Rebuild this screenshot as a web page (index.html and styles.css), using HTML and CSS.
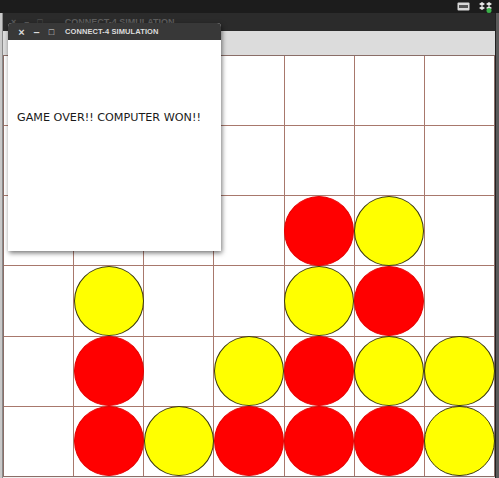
FILE: index.html
```html
<!DOCTYPE html>
<html>
<head>
<meta charset="utf-8">
<link rel="stylesheet" href="styles.css">
</head>
<body>
<div class="topbar">
  <svg class="tray" width="13" height="9" viewBox="0 0 13 9"><rect x="0.5" y="0.5" width="12" height="8" rx="1" fill="#d8d8d8"/><rect x="2" y="3" width="9" height="3" fill="#555"/></svg>
  <svg class="tray" width="13" height="12" viewBox="0 0 13 12"><path d="M3 1 L6 3 L3 5 L0 3 Z M10 1 L13 3 L10 5 L7 3 Z M3 5 L6 7 L3 9 L0 7 Z M10 5 L13 7 L10 9 L7 7 Z" fill="#e8e8e8"/><circle cx="10" cy="9.5" r="2.5" fill="#3bb34a"/></svg>
</div>
<div class="main">
  <div class="leftstrip"></div>
  <div class="window">
    <div class="wtitle"><span class="wctl">×</span><span class="wctl">–</span><span class="wctl">□</span><span class="wname">CONNECT-4 SIMULATION</span></div>
    <div class="toolbar"></div>
    <div class="board">
      <div class="cell"></div><div class="cell"></div><div class="cell"></div><div class="cell"></div><div class="cell"></div><div class="cell"></div><div class="cell"></div>
      <div class="cell"></div><div class="cell"></div><div class="cell"></div><div class="cell"></div><div class="cell"></div><div class="cell"></div><div class="cell"></div>
      <div class="cell"></div><div class="cell"></div><div class="cell"></div><div class="cell"></div><div class="cell"><div class="disc red"></div></div><div class="cell"><div class="disc yellow"></div></div><div class="cell"></div>
      <div class="cell"></div><div class="cell"><div class="disc yellow"></div></div><div class="cell"></div><div class="cell"></div><div class="cell"><div class="disc yellow"></div></div><div class="cell"><div class="disc red"></div></div><div class="cell"></div>
      <div class="cell"></div><div class="cell"><div class="disc red"></div></div><div class="cell"></div><div class="cell"><div class="disc yellow"></div></div><div class="cell"><div class="disc red"></div></div><div class="cell"><div class="disc yellow"></div></div><div class="cell"><div class="disc yellow"></div></div>
      <div class="cell"></div><div class="cell"><div class="disc red"></div></div><div class="cell"><div class="disc yellow"></div></div><div class="cell"><div class="disc red"></div></div><div class="cell"><div class="disc red"></div></div><div class="cell"><div class="disc red"></div></div><div class="cell"><div class="disc yellow"></div></div>
    </div>
  </div>
  <div class="rightstrip"></div>
</div>
<div class="dialog">
  <div class="dtitle"><span class="dctl">×</span><span class="dctl">–</span><span class="dctl sq">□</span><span class="dname">CONNECT-4 SIMULATION</span></div>
  <div class="dbody"><p class="msg">GAME OVER!! COMPUTER WON!!</p></div>
</div>
</body>
</html>
```
FILE: styles.css
```css
html, body {
  margin: 0;
  padding: 0;
}
body {
  width: 499px;
  height: 478px;
  overflow: hidden;
  position: relative;
  background: #1c1c1c;
  font-family: "Liberation Sans", "DejaVu Sans", sans-serif;
}
.topbar {
  height: 13px;
  display: flex;
  justify-content: flex-end;
  align-items: center;
  gap: 9px;
  padding-right: 7px;
  background: #1c1c1c;
}
.tray { display: block; }
.main {
  display: flex;
  height: 465px;
}
.leftstrip {
  width: 3px;
  background: #c9c9c9;
  border-right: 1px solid #8a8a8a;
  box-sizing: border-box;
}
.window {
  width: 492px;
  display: flex;
  flex-direction: column;
  background: #f2f2f2;
}
.wtitle {
  height: 18px;
  background: #2b2b2b;
  display: flex;
  align-items: center;
  padding-left: 8px;
  gap: 8px;
  color: #5e5e5e;
  font-size: 9px;
  font-weight: bold;
}
.wname { margin-left: 14px; }
.toolbar {
  height: 24px;
  background: #dcdcdc;
}
.board {
  height: 422px;
  box-sizing: border-box;
  display: grid;
  grid-template-columns: repeat(7, 1fr);
  grid-template-rows: repeat(6, 1fr);
  gap: 1px;
  background: #a8786c;
  border: 1px solid #8a6e68;
}
.cell {
  background: #ffffff;
  position: relative;
}
.disc {
  width: calc(100% + 1px);
  height: calc(100% + 1px);
  margin: -0.5px;
  box-sizing: border-box;
  border-radius: 50%;
}
.red {
  background: #ff0000;
  border: 1px solid #e60000;
}
.yellow {
  background: #ffff00;
  border: 1px solid #3a3a10;
}
.rightstrip {
  width: 4px;
  background: #5a5a5a;
  border-left: 1px solid #222;
  box-sizing: border-box;
}
.dialog {
  position: absolute;
  left: 8px;
  top: 23px;
  width: 213px;
  height: 228px;
  background: #ffffff;
  border-radius: 4px 4px 0 0;
  box-shadow: 1px 2px 5px rgba(0,0,0,0.55);
  display: flex;
  flex-direction: column;
}
.dtitle {
  height: 17px;
  background: #383838;
  border-radius: 4px 4px 0 0;
  display: flex;
  align-items: center;
  padding-left: 6px;
  color: #dcdcdc;
  font-size: 11px;
  font-weight: bold;
}
.dctl {
  width: 15px;
  text-align: center;
}
.sq { font-size: 9px; }
.dname {
  margin-left: 6px;
  font-size: 7.5px;
  letter-spacing: 0.1px;
}
.dbody {
  flex: 1;
  padding: 71px 0 0 9px;
}
.msg {
  margin: 0;
  font-size: 11.2px;
  color: #1a1a1a;
  font-family: "DejaVu Sans", sans-serif;
  letter-spacing: 0;
}
```
